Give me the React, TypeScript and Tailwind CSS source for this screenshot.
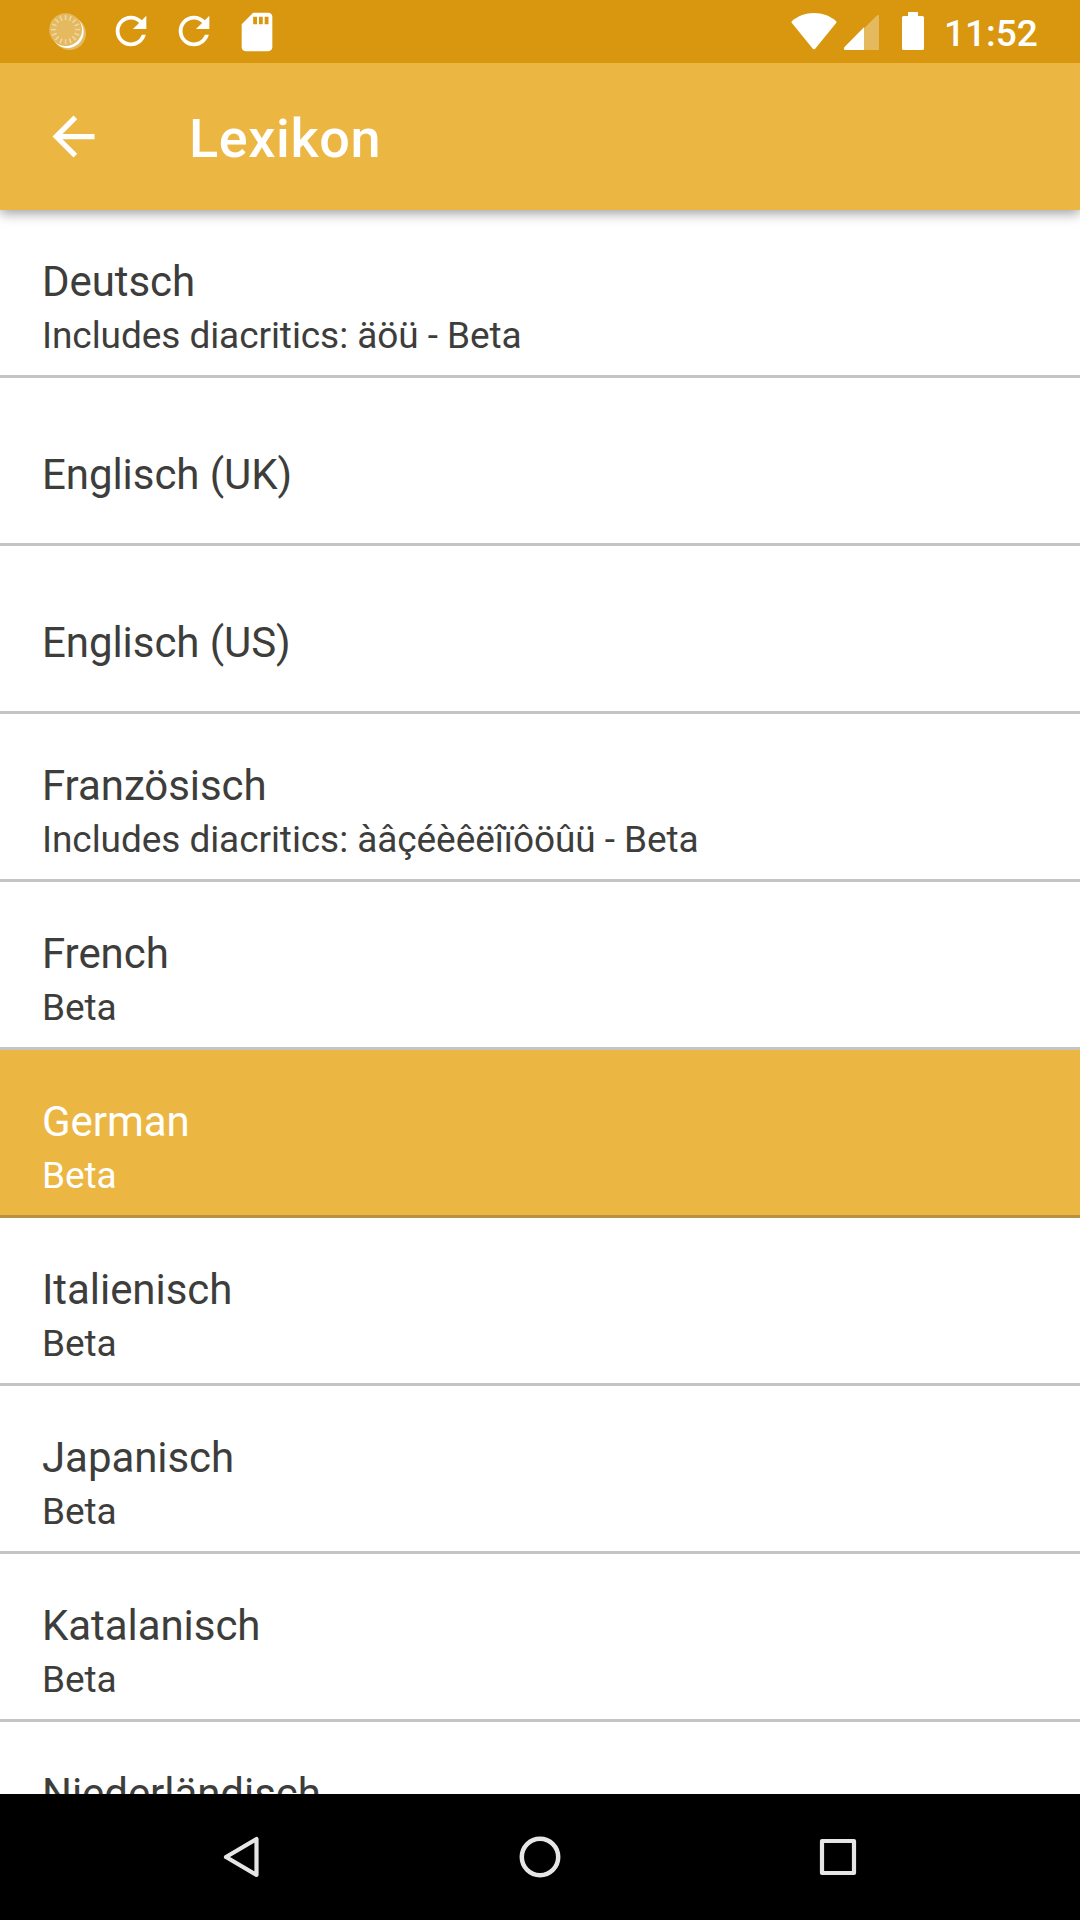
type Item = { title: string; note?: string; selected?: boolean };

const items: Item[] = [
  { title: "Deutsch", note: "Includes diacritics: äöü - Beta" },
  { title: "Englisch (UK)" },
  { title: "Englisch (US)" },
  { title: "Französisch", note: "Includes diacritics: àâçéèêëîïôöûü - Beta" },
  { title: "French", note: "Beta" },
  { title: "German", note: "Beta", selected: true },
  { title: "Italienisch", note: "Beta" },
  { title: "Japanisch", note: "Beta" },
  { title: "Katalanisch", note: "Beta" },
  { title: "Niederländisch", note: "Beta" },
];

const spokes = Array.from({ length: 16 }, (_, i) => i * 22.5);

function SpinnerIcon() {
  return (
    <svg className="h-[42px] w-[42px]" viewBox="0 0 42 42">
      <circle cx="22.5" cy="21.5" r="16.5" fill="#fff" opacity=".35" />
      <circle cx="20.5" cy="19.7" r="16.2" fill="#fff" />
      <circle cx="18.6" cy="17.6" r="16.4" fill="#e4b95f" />
      {spokes.map((a) => (
        <path key={a} d="M18.600 3v5" stroke="#efd8a6" strokeWidth="1.5" transform={`rotate(${a} 18.6 17.6)`} />
      ))}
    </svg>
  );
}

function RefreshIcon() {
  return (
    <svg className="h-[46px] w-[46px]" viewBox="0 0 24 24" fill="#fff">
      <path d="M17.65 6.35C16.2 4.9 14.21 4 12 4c-4.42 0-7.99 3.58-7.99 8s3.57 8 7.99 8c3.73 0 6.84-2.55 7.73-6h-2.08c-.82 2.33-3.04 4-5.65 4-3.31 0-6-2.69-6-6s2.69-6 6-6c1.66 0 3.14.69 4.22 1.78L13 11h7V4l-2.35 2.35z" />
    </svg>
  );
}

function StatusBar() {
  return (
    <div className="relative z-20 flex h-[63px] shrink-0 bg-[#d8970f]">
      <div className="flex flex-1 pt-[8px] pl-[46px]">
        <div className="w-[62px] pt-[4px] pl-[1px]">
          <SpinnerIcon />
        </div>
        <div className="w-[63px]">
          <RefreshIcon />
        </div>
        <div className="w-[63px]">
          <RefreshIcon />
        </div>
        <svg className="mt-[1px] h-[46px] w-[46px]" viewBox="0 0 24 24" fill="#fff">
          <path d="M18 2h-8L4.02 8 4 20c0 1.1.9 2 2 2h12c1.1 0 2-.9 2-2V4c0-1.1-.9-2-2-2zm-6 6h-2V4h2v4zm3 0h-2V4h2v4zm3 0h-2V4h2v4z" />
        </svg>
      </div>
      <div className="flex pt-[12px] pr-[42px]">
        <svg className="h-[39px] w-[46px]" viewBox="0 0 46 39" fill="#fff">
          <path d="M.8 9.2C7 3.800 14.500 1 23 1s16 2.800 22.200 8.200c.5.500.5 1 .1 1.600L24.600 36.300q-1.600 1.800-3.200 0L.7 10.800c-.4-.6-.4-1.100.1-1.600z" />
        </svg>
        <svg className="ml-[6px] h-[39px] w-[37px]" viewBox="0 0 37 39" fill="#fff">
          <path d="M34.200 3.200Q36 2.600 36 4V37q0 1-1 1H21V16.200z" opacity=".33" />
          <path d="M21 15.200V38H2q-1.500 0-1-1.800.2-.8 1-1.700z" />
        </svg>
        <svg className="ml-[22px] h-[39px] w-[23px]" viewBox="0 0 23 39" fill="#fff">
          <path d="M6 0h10v4h4.500q1.500 0 1.500 1.500v31q0 1.500-1.500 1.500h-19Q0 38 0 36.500v-31Q0 4 1.500 4H6z" />
        </svg>
        <div className="ml-[19px] w-[94px] text-[37px] leading-[43px] font-medium whitespace-nowrap text-white">11:52</div>
      </div>
    </div>
  );
}

function AppBar() {
  return (
    <header className="relative z-10 flex h-[147px] shrink-0 items-center bg-[#ecb642] shadow-[0_3px_12px_rgba(0,0,0,0.4)]">
      <svg className="ml-[42px] h-[63px] w-[63px] -mt-[1px]" viewBox="0 0 24 24" fill="#fff">
        <path d="M20 11H7.830l5.590-5.590L12 4l-8 8 8 8 1.410-1.410L7.830 13H20v-2z" />
      </svg>
      <h1 className="ml-[84px] pt-[5px] text-[54px] leading-[64px] font-medium tracking-[0.6px] text-white">Lexikon</h1>
    </header>
  );
}

function Row({ title, note, selected }: Item) {
  return (
    <li
      className={
        "flex h-[168px] shrink-0 flex-col border-b-[3px] pl-[42px] " +
        (selected ? "border-[#b89240] bg-[#ecb642] text-white" : "border-[#c4c4c4] bg-white text-[#3d3d3c]")
      }
    >
      <div className={"text-[42px] leading-[50px] tracking-[-0.06px] " + (note ? "pt-[47px]" : "pt-[72px]")}>{title}</div>
      {note && <div className="pt-[8px] text-[37px] leading-[42px] tracking-[-0.07px]">{note}</div>}
    </li>
  );
}

function NavBar() {
  return (
    <nav className="flex h-[126px] shrink-0 items-center justify-center gap-[250px] bg-black">
      <svg className="h-12 w-12" viewBox="0 0 48 48" fill="none" stroke="#e6e6e6" strokeWidth="4.2" strokeLinejoin="round">
        <path d="M38.500 6v36L8 24z" />
      </svg>
      <svg className="h-12 w-12" viewBox="0 0 48 48" fill="none" stroke="#e6e6e6" strokeWidth="4.500">
        <circle cx="24" cy="24" r="18.200" />
      </svg>
      <svg className="h-12 w-12" viewBox="0 0 48 48" fill="none" stroke="#e6e6e6" strokeWidth="4.200" strokeLinejoin="round">
        <path d="M8 8h32v32H8z" />
      </svg>
    </nav>
  );
}

export default function App() {
  return (
    <div className="flex h-[1920px] w-[1080px] flex-col overflow-hidden bg-white font-[Roboto,sans-serif]">
      <StatusBar />
      <AppBar />
      <ul className="flex min-h-0 flex-1 flex-col overflow-hidden">
        {items.map((it) => (
          <Row key={it.title} {...it} />
        ))}
      </ul>
      <NavBar />
    </div>
  );
}
